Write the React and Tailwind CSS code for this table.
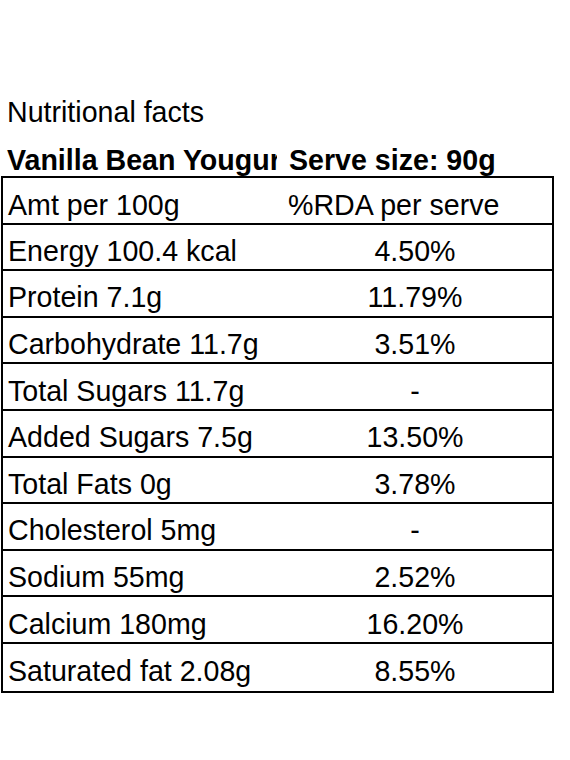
const rows = [
  ['Energy 100.4 kcal', '4.50%'],
  ['Protein 7.1g', '11.79%'],
  ['Carbohydrate 11.7g', '3.51%'],
  ['Total Sugars 11.7g', '-'],
  ['Added Sugars 7.5g', '13.50%'],
  ['Total Fats 0g', '3.78%'],
  ['Cholesterol 5mg', '-'],
  ['Sodium 55mg', '2.52%'],
  ['Calcium 180mg', '16.20%'],
  ['Saturated fat 2.08g', '8.55%'],
];

const App = () => {
  return (
    <div className="min-h-[760px] w-[570px] bg-white text-black text-[28.6px] leading-[32px]" style={{ fontFamily: '"Liberation Sans", Arial, sans-serif' }}>
      <div className="pt-[96px] pl-[7px]">Nutritional facts</div>
      <div className="mt-[16px] flex font-bold">
        <div className="w-[277px] pl-[7px] overflow-hidden whitespace-nowrap">Vanilla Bean Yougurt</div>
        <div className="pl-[12px]">Serve size: 90g</div>
      </div>
      <div className="ml-[1px] w-[553px] border-2 border-black">
        <div className="h-[46.6px] border-b-2 border-black flex items-center pt-[9px]">
          <div className="w-[284px] pl-[5px]">Amt per 100g</div>
          <div className="pl-[1px]">%RDA per serve</div>
        </div>
        {rows.map(([name, rda], i) => (
          <div key={name} className={`h-[46.6px] flex items-center pt-[8px] ${i < rows.length - 1 ? 'border-b-2 border-black' : ''}`}>
            <div className="w-[284px] pl-[5px] whitespace-nowrap">{name}</div>
            <div className="flex-1 text-center pr-[9px]">{rda}</div>
          </div>
        ))}
      </div>
    </div>
  );
};
export default App;
